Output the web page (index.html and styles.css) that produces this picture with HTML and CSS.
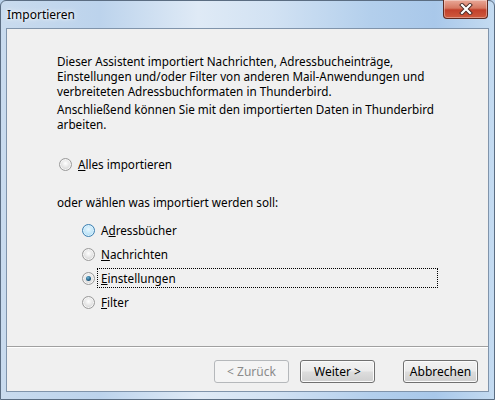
FILE: index.html
```html
<!DOCTYPE html>
<html lang="de">
<head>
  <meta charset="UTF-8">
  <meta name="viewport" content="width=device-width, initial-scale=1.0">
  <title>Importieren</title>
  <link rel="stylesheet" href="styles.css">
</head>
<body>
  <div class="window">
    <div class="titlebar">
      <span class="title">Importieren</span>
      <button class="close" title="Schließen">
        <svg width="14" height="12" viewBox="0 0 14 12">
          <path d="M3 2 L11 10 M11 2 L3 10" stroke="#4a2a26" stroke-width="4" stroke-linecap="square"/>
          <path d="M3 2 L11 10 M11 2 L3 10" stroke="#ffffff" stroke-width="2.2" stroke-linecap="square"/>
        </svg>
      </button>
    </div>
    <div class="client">
      <div class="content">
        <p class="intro">
          Dieser Assistent importiert Nachrichten, Adressbucheinträge,<br>
          Einstellungen und/oder Filter von anderen Mail-Anwendungen und<br>
          verbreiteten Adressbuchformaten in Thunderbird.
        </p>
        <p class="intro second">
          Anschließend können Sie mit den importierten Daten in Thunderbird<br>
          arbeiten.
        </p>
        <div class="option all">
          <span class="radio"></span>
          <span class="label"><u>A</u>lles importieren</span>
        </div>
        <p class="choose">oder wählen was importiert werden soll:</p>
        <div class="options">
          <div class="option">
            <span class="radio hover"></span>
            <span class="label">A<u>d</u>ressbücher</span>
          </div>
          <div class="option">
            <span class="radio"></span>
            <span class="label"><u>N</u>achrichten</span>
          </div>
          <div class="option">
            <span class="radio checked"></span>
            <span class="label focus"><u>E</u>instellungen</span>
          </div>
          <div class="option">
            <span class="radio"></span>
            <span class="label"><u>F</u>ilter</span>
          </div>
        </div>
      </div>
      <div class="footer">
        <button class="btn" disabled>&lt; Zurück</button>
        <button class="btn">Weiter &gt;</button>
        <button class="btn cancel">Abbrechen</button>
      </div>
    </div>
  </div>
</body>
</html>
```

FILE: styles.css
```css
* {
  box-sizing: border-box;
}
html, body {
  margin: 0;
  height: 100%;
}
body {
  font-family: "Noto Sans", "Open Sans", sans-serif;
  font-size: 11.7px;
  color: #000;
  background: #b9d1ea;
  overflow: hidden;
}
.window {
  width: 495px;
  height: 400px;
  display: flex;
  flex-direction: column;
  background: linear-gradient(90deg, #c9dbee 0%, #bcd3ec 20%, #dfeaf6 40%, #d2e2f3 55%, #b3cfec 75%, #a9c8ea 88%, #c4dbf1 100%);
  border: 1px solid #5b6d82;
  border-radius: 6px 6px 0 0;
}
.titlebar {
  height: 27px;
  display: flex;
  align-items: flex-start;
  justify-content: space-between;
  padding-left: 6px;
}
.title {
  margin-top: 5px;
  font-size: 12px;
  text-shadow: 0 0 6px #fff, 0 0 3px #fff;
}
.close {
  width: 45px;
  height: 19px;
  margin: -1px 6px 0 0;
  padding: 0;
  border: 1px solid #5e2a22;
  border-top: none;
  border-radius: 0 0 4px 4px;
  background: linear-gradient(#e9a898 0%, #d67862 45%, #c2402b 55%, #cf5a3e 100%);
  box-shadow: inset 0 0 0 1px rgba(255, 255, 255, 0.35);
  display: flex;
  align-items: center;
  justify-content: center;
}
.client {
  flex: 1;
  margin: 0 5px 7px 5px;
  border: 1px solid #8094ab;
  background: #f0f0f0;
  display: flex;
  flex-direction: column;
}
.content {
  flex: 1;
  padding: 25px 20px 0 50px;
}
p {
  margin: 0;
  line-height: 15px;
}
.intro.second {
  margin-top: 3px;
}
.option {
  height: 20px;
  display: flex;
  align-items: center;
}
.option.all {
  margin-top: 22px;
  margin-left: 2px;
}
.choose {
  margin-top: 21px;
}
.options {
  margin-top: 10px;
  margin-left: 25px;
  display: flex;
  flex-direction: column;
  gap: 4px;
}
.radio {
  width: 13px;
  height: 13px;
  border-radius: 50%;
  border: 1px solid #9a9a9a;
  background: radial-gradient(circle at 50% 40%, #ffffff 0%, #e6e6e6 45%, #cfcfcf 80%);
  box-shadow: inset 0 0 0 1px #f6f6f6;
  margin-right: 2px;
  flex: none;
  display: flex;
  align-items: center;
  justify-content: center;
}
.radio.hover {
  border-color: #3c7fb1;
  background: radial-gradient(circle at 50% 40%, #eaf7fe 0%, #c2e6f8 50%, #9fd4f0 85%);
  box-shadow: inset 0 0 0 1px #def2fc;
}
.radio.checked::after {
  content: "";
  width: 5px;
  height: 5px;
  border-radius: 50%;
  background: radial-gradient(circle at 40% 35%, #6fb6d8 0%, #1d5a80 60%, #0f3a58 100%);
}
.label {
  line-height: 18px;
  padding: 0 3px;
  border: 1px dotted transparent;
}
.label.focus {
  flex: 1;
  margin-right: 30px;
  border-color: #000;
}
.footer {
  height: 45px;
  border-top: 1px solid #a0a0a0;
  box-shadow: inset 0 1px 0 #fff;
  display: flex;
  align-items: flex-start;
  padding: 13px 10px 0 0;
  justify-content: flex-end;
  gap: 11px;
}
.btn {
  width: 75px;
  height: 23px;
  padding: 0;
  font-family: inherit;
  font-size: 12px;
  color: #000;
  border: 1px solid #707070;
  border-radius: 3px;
  background: linear-gradient(#f2f2f2 0%, #ebebeb 48%, #dddddd 52%, #cfcfcf 100%);
  box-shadow: inset 0 0 0 1px #fbfbfb;
}
.btn:disabled {
  color: #8a8a8a;
  border-color: #b5b8bb;
  background: #f4f4f4;
  box-shadow: none;
}
.btn.cancel {
  margin-left: 17px;
}
```
